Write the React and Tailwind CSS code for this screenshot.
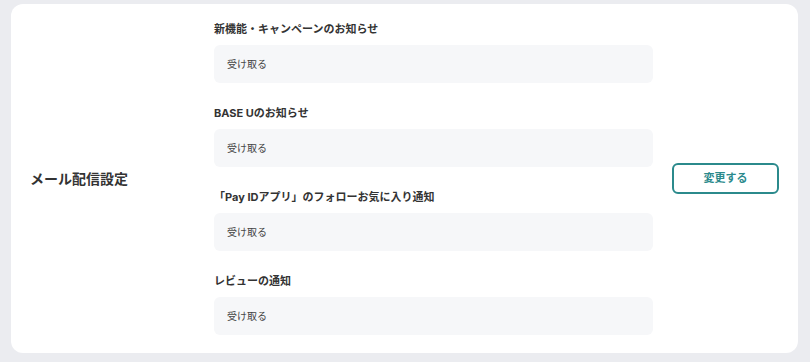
const items = [
  "新機能・キャンペーンのお知らせ",
  "BASE Uのお知らせ",
  "「Pay IDアプリ」のフォローお気に入り通知",
  "レビューの通知",
];

export default function App() {
  return (
    <div
      className="min-h-[362px] w-[810px] bg-[#ebecf0] pt-[4px] pb-[9px] pl-[11px] pr-[12px]"
      style={{ fontFamily: '"Inter", "Noto Sans CJK JP", sans-serif' }}
    >
      <div className="flex items-center rounded-[12px] bg-white pl-[19px] pr-[19px] pt-[17px] pb-[18px]">
        {/* LABEL */}
        <div className="w-[184px] shrink-0 text-[14px] font-bold text-[#333]">
          メール配信設定
        </div>

        {/* SETTINGS */}
        <div className="flex w-[439px] shrink-0 flex-col gap-[22px]">
          {items.map((title) => (
            <div key={title} className="flex flex-col gap-2">
              <p className="h-4 text-[11px] font-bold leading-4 text-[#333]">
                {title}
              </p>
              <div className="flex h-[38px] items-center rounded-[6px] bg-[#f6f7f9] pl-[13px] text-[10px] text-[#444]">
                受け取る
              </div>
            </div>
          ))}
        </div>

        <button className="ml-[19px] h-[31px] w-[107px] shrink-0 rounded-[6px] border-2 border-[#2b8a8c] text-[11px] font-bold text-[#2b8a8c]">
          変更する
        </button>
      </div>
    </div>
  );
}
